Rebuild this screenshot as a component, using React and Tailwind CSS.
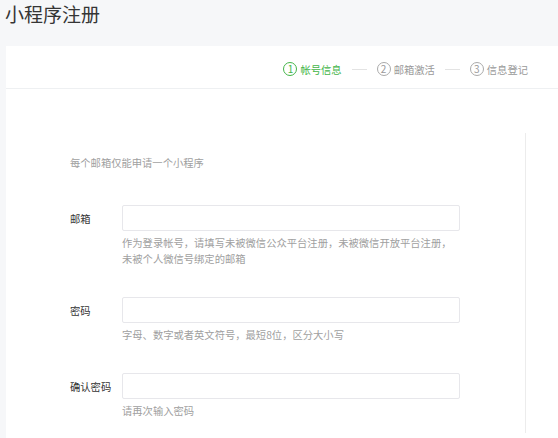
import React from "react";

const font = { fontFamily: '"Noto Sans CJK SC", "Noto Sans", sans-serif' };

function Step({ n, label, active }) {
  const color = active ? "text-[#44b549] border-[#44b549]" : "text-[#9a9a9a] border-[#aaaaaa]";
  return (
    <div className={`flex items-center ${active ? "text-[#44b549]" : "text-[#9a9a9a]"}`}>
      <span
        className={`flex h-[14px] w-[14px] items-center justify-center rounded-full border text-[10px] leading-none ${color}`}
      >
        {n}
      </span>
      <span className="ml-[3px] text-[10.3px] leading-[17px]">{label}</span>
    </div>
  );
}

function Line() {
  return <div className="mx-[10px] h-px w-[15px] bg-[#e3e3e3]" />;
}

function Field({ label, hint, mt }) {
  return (
    <div className={mt}>
      <div className="flex items-center">
        <div className="w-[52px] text-[10.3px] leading-[17px] text-[#353535]">{label}</div>
        <div className="h-[26px] w-[338px] rounded-[2px] border border-[#e7e7eb] bg-white" />
      </div>
      <div className="ml-[52px] mt-[4px] text-[10.3px] leading-[16px] text-[#a0a0a0]">{hint}</div>
    </div>
  );
}

export default function App() {
  return (
    <div className="h-[438px] w-[558px] overflow-hidden bg-[#f6f7f9]" style={font}>
      <div className="h-[46px] pl-[5px] text-[19px] leading-[28px] text-[#353535]">小程序注册</div>
      <div className="ml-[6px] h-[392px] bg-white">
        <div className="flex h-[43px] items-center justify-end border-b border-[#eef0f2] pr-[30px] pt-[4px]">
          <Step n="1" label="帐号信息" active />
          <Line />
          <Step n="2" label="邮箱激活" />
          <Line />
          <Step n="3" label="信息登记" />
        </div>
        <div className="pt-[44px]">
          <div className="h-[300px] w-[520px] border-r border-[#ececec] pl-[64px] pt-[21px]">
            <div className="text-[10.3px] leading-[17px] text-[#a0a0a0]">每个邮箱仅能申请一个小程序</div>
            <Field
              mt="mt-[34px]"
              label="邮箱"
              hint={
                <>
                  作为登录帐号，请填写未被微信公众平台注册，未被微信开放平台注册，
                  <br />
                  未被个人微信号绑定的邮箱
                </>
              }
            />
            <Field mt="mt-[30px]" label="密码" hint="字母、数字或者英文符号，最短8位，区分大小写" />
            <Field mt="mt-[30px]" label="确认密码" hint="请再次输入密码" />
          </div>
        </div>
      </div>
    </div>
  );
}
